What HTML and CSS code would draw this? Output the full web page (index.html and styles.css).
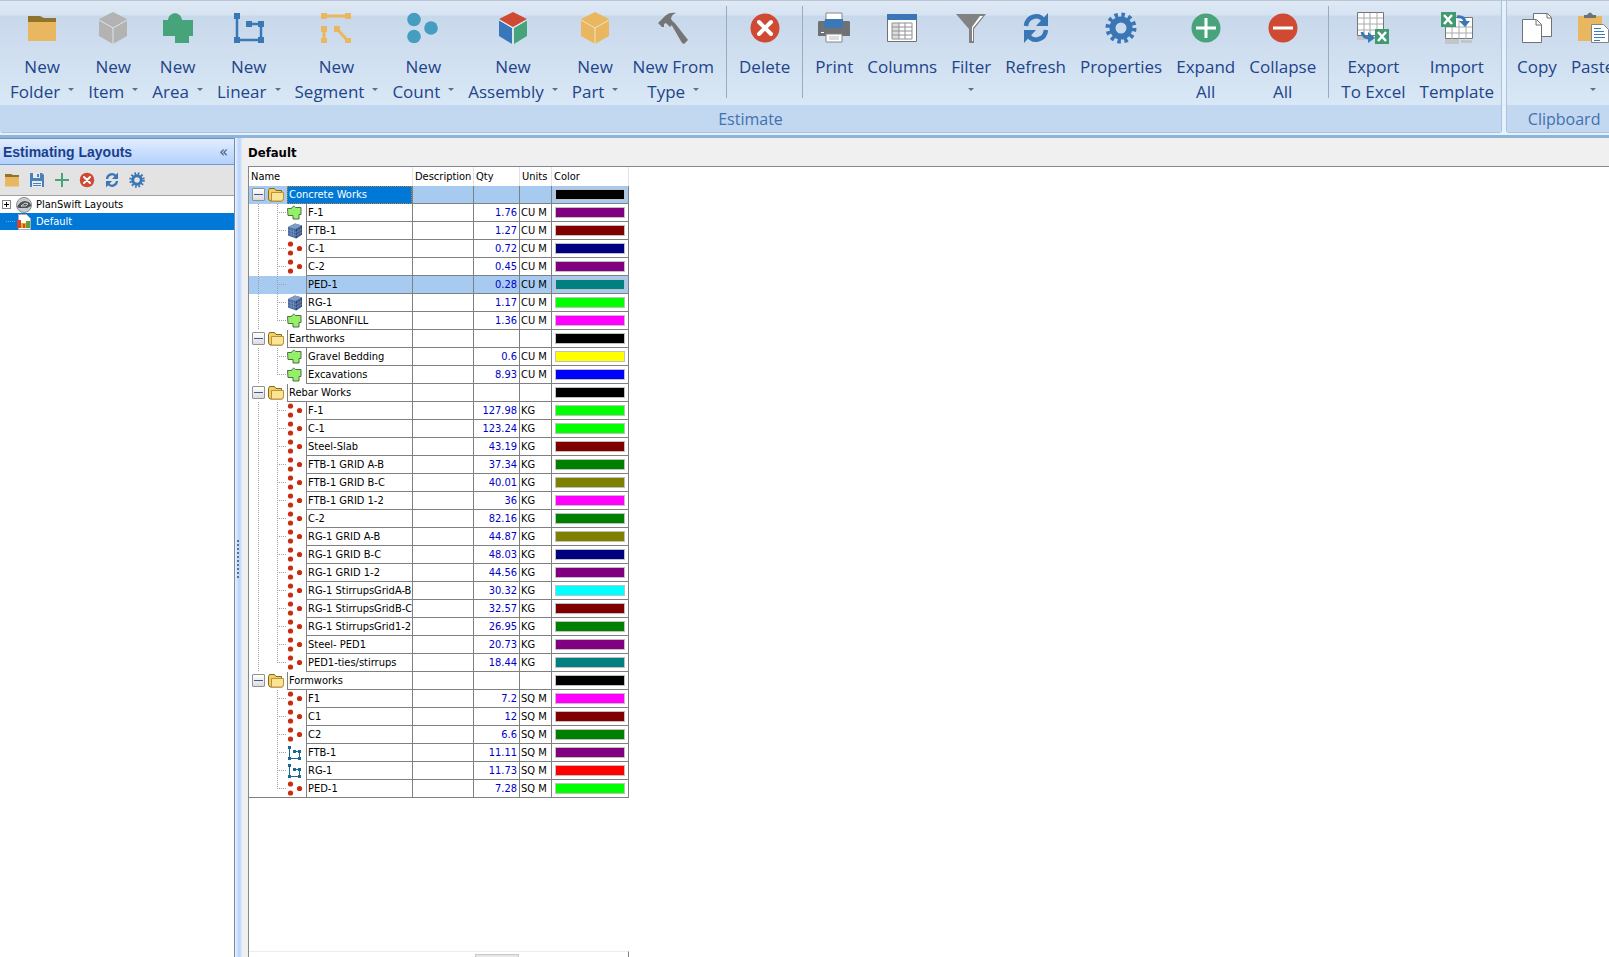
FILE: index.html
```html
<!DOCTYPE html>
<html lang="en">
<head>
  <meta charset="UTF-8">
  <title>Estimating</title>
  <link rel="stylesheet" href="styles.css">
</head>
<body>
  <!-- shared icons -->
  <svg class="defs" width="0" height="0">
    <symbol id="i-folder" viewBox="0 0 32 32"><path fill="#8f742c" d="M2 4h12l4 2h12v4H2z"/><path fill="#e9b760" d="M2 10h28v19H2z"/></symbol>
    <symbol id="i-cube" viewBox="0 0 32 32"><path fill="#b3b3b3" d="M16 0l14 7v17l-14 8-14-8V7z"/><path fill="none" stroke="#dfe4ea" d="M2 8l14 8 14-8M16 16v16"/></symbol>
    <symbol id="i-area" viewBox="0 0 32 32"><path fill="#47a47a" d="M1 8h5c1-9 13-9 14 0h11v16h-4v7H13v-7H1z"/></symbol>
    <symbol id="i-linear" viewBox="0 0 32 32"><path fill="none" stroke="#3a78b5" stroke-width="2.5" d="M4 4v24h24V12H15"/><path fill="#3a78b5" d="M1 1h6v6H1zM1 25h6v6H1zM25 25h6v6h-6zM25 9h6v6h-6zM13 9h6v6h-6z"/></symbol>
    <symbol id="i-segment" viewBox="0 0 32 32"><path fill="none" stroke="#eab75f" stroke-width="3" d="M4 4h24M4 17v12M17 17l11 12"/><path fill="#eab75f" d="M1 1h6v6H1zM25 1h6v6h-6zM1 14h6v6H1zM1 26h6v5H1zM14 14h6v6h-6zM25 26h6v5h-6z"/></symbol>
    <symbol id="i-count" viewBox="0 0 32 32"><g fill="#459dbf"><circle cx="7" cy="7.500" r="6.800"/><circle cx="7" cy="24.500" r="6.800"/><circle cx="24" cy="16" r="6.800"/></g></symbol>
    <symbol id="i-assembly" viewBox="0 0 32 32"><path fill="#d04a33" d="M16 0l14 7-14 8L2 7z"/><path fill="#3a76ba" d="M2 8l13 8v16L2 24z"/><path fill="#47a47a" d="M30 8l-13 8v16l13-8z"/><path fill="none" stroke="#e6edf4" d="M2 8l14 8 14-8M16 16v16"/></symbol>
    <symbol id="i-part" viewBox="0 0 32 32"><path fill="#e9b760" d="M16 0l14 7v17l-14 8-14-8V7z"/><path fill="none" stroke="#efe3cb" d="M2 8l14 8 14-8M16 16v16"/></symbol>
    <symbol id="i-hammer" viewBox="0 0 32 32"><path fill="#757575" d="M1 11l7-7c3-3 7-4 11-3-3 1-5 3-5 6l3 4-4 4-4-4-2 1v3H5z"/><path fill="#757575" d="M14 12l3-2 14 18-4 4-2-1z"/></symbol>
    <symbol id="i-delete" viewBox="0 0 32 32"><circle cx="16" cy="16" r="14.5" fill="#d04a33"/><path stroke="#fff" stroke-width="4" stroke-linecap="round" d="M10 10l12 12M22 10L10 22"/></symbol>
    <symbol id="i-print" viewBox="0 0 32 32"><path fill="#6f7173" d="M1 9h30q1 0 1 2v13H0V11q0-2 1-2z"/><path fill="#fff" stroke="#848688" d="M8 1h16v9H8z"/><path fill="#3a78b8" d="M7 7h18v9H6z"/><path fill="#fff" stroke="#848688" d="M8 22h16v8H8z"/><path stroke="#bbb" d="M11 25h10M11 27h10"/><path fill="#fff" d="M3 20h3v1H3z"/></symbol>
    <symbol id="i-columns" viewBox="0 0 32 32"><path fill="#fff" stroke="#6f7173" d="M1.500 2.500h29v27h-29z"/><path fill="#3a76b5" d="M1 2h30v6H1z"/><path fill="#ddd" d="M6 11h7v16H6z"/><path fill="none" stroke="#8e9092" d="M6 11h20v16H6zM6 15h20M6 19h20M6 23h20M13 11v16M19 11v16"/></symbol>
    <symbol id="i-filter" viewBox="0 0 32 32"><path fill="#828282" d="M1 2h30L19 17v14h-5V17z"/><path fill="#fff" d="M25 4h3L18 16v13h-1V15z"/></symbol>
    <symbol id="i-refresh" viewBox="0 0 32 32"><path fill="none" stroke="#3a76b5" stroke-width="4.500" d="M6 14c1-10 13-13 18-5M26 18c-1 10-13 13-18 5"/><path fill="#3a76b5" d="M28 1v13H16zM4 31V18h12z"/></symbol>
    <symbol id="i-gear" viewBox="0 0 32 32"><circle cx="16" cy="16" r="8.500" fill="none" stroke="#3a76b5" stroke-width="6"/><circle cx="16" cy="16" r="13" fill="none" stroke="#3a76b5" stroke-width="5" stroke-dasharray="3.400 3.407"/></symbol>
    <symbol id="i-expand" viewBox="0 0 32 32"><circle cx="16" cy="16" r="14.500" fill="#47a47a"/><path stroke="#fff" stroke-width="3" d="M6 16h20M16 6v20"/></symbol>
    <symbol id="i-collapse" viewBox="0 0 32 32"><circle cx="16" cy="16" r="14.500" fill="#d04a33"/><path stroke="#fff" stroke-width="3" d="M6 16h20"/></symbol>
    <symbol id="i-export" viewBox="0 0 32 32"><path fill="#c3c6c9" d="M0 24h14v4H0z"/><path fill="#fff" stroke="#777" d="M.5.5h26v23H.5z"/><path stroke="#aaa" d="M1 6h25M1 12h25M1 18h25M7 1v23M13 1v23M20 1v23"/><path fill="none" stroke="#3a78b8" stroke-width="3" d="M5 20q1 6 8 6"/><path fill="#3a78b8" d="M11 20l7 6-7 5z"/><path fill="#3f9a70" d="M18 17h14v15H18z"/><path stroke="#fff" stroke-width="2.500" d="M21 20l8 9M29 20l-8 9"/></symbol>
    <symbol id="i-import" viewBox="0 0 32 32"><path fill="#c3c6c9" d="M4 27h14v5H4zM20 28h11v3H20z"/><path fill="#fff" stroke="#777" d="M4.500 5.500h27v21h-27z"/><path stroke="#aaa" d="M5 15h26M5 21h26M11 8v19M18 8v19M25 8v19"/><path fill="#3f9a70" d="M0 0h15v15H0z"/><path stroke="#fff" stroke-width="2.500" d="M3 3l8 9M11 3l-8 9"/><path fill="none" stroke="#3a78b8" stroke-width="3" d="M16 5q7-1 8 5"/><path fill="#3a78b8" d="M18 9h11l-5 6z"/></symbol>
    <symbol id="i-copy" viewBox="0 0 32 32"><g fill="#fff" stroke="#6f7173"><path d="M12.500 1.500h14l4 4v19h-18z"/><path d="M26 2v4h4"/><path d="M1.500 7.500h14l5 5v18h-19z"/><path d="M15 8v5h5"/></g></symbol>
    <symbol id="i-paste" viewBox="0 0 32 32"><path fill="#e9b760" d="M1 4h24v25H1z"/><path fill="#6f7173" d="M7 6V3h3q3-5 6 0h3v3z"/><path fill="#fff" stroke="#848688" d="M14.500 12.500h12l5 5v13h-17z"/><path stroke="#3a78b8" d="M17 16.500h7M17 19.500h10M17 22.500h11M17 25.500h11M17 28.500h6"/></symbol>
    <symbol id="i-save" viewBox="0 0 16 16"><path fill="#4b80b8" d="M1 1h12l2 2v12H1z"/><path fill="#e8edf3" d="M4 1h7v5H4zM3 9h10v6H3z"/><path fill="#4b80b8" d="M8 2h2v3H8zM4 11h8v1H4zM4 13h8v1H4z"/></symbol>
    <symbol id="i-plus" viewBox="0 0 16 16"><path stroke="#47a47a" stroke-width="2" d="M1 8h14M8 1v14"/></symbol>
    <symbol id="i-globe" viewBox="0 0 16 16"><circle cx="8" cy="8" r="7.500" fill="#c9cccf" stroke="#8b8e91"/><path fill="#4a5054" d="M1 10q3-6 8-6 6 1 6 5l-4 2H3z"/><path fill="none" stroke="#d7dadc" d="M5 9l4-3 3 1-2 2z"/></symbol>
    <symbol id="i-chart" viewBox="0 0 16 16"><path fill="#fff" stroke="#aab" d="M2.500.5h8l4 4v11h-12z"/><path fill="#d8442c" d="M1 6h4v8H1z"/><path fill="#e9a820" d="M5 9h5v5H5z"/><path fill="#d8442c" d="M7 10h2v4H7z"/><path fill="#57a336" d="M10 7h4v7h-4z"/></symbol>
    <symbol id="t-folder" viewBox="0 0 16 16"><path fill="#f0cf66" stroke="#87671a" d="M.5 3.500l1-2h5l1.500 2h5.500v3l2 .5v5l-1.500 2h-12l-1.500-2z"/><path fill="#fbe494" stroke="#b8923a" d="M3.500 5.500h12v6l-1 2.500h-11z"/></symbol>
    <symbol id="t-area" viewBox="0 0 16 16"><path fill="#96ef69" stroke="#4d6f45" d="M.5 3.500h4q2-4 4-1h5.500v7h-2v4.500h-6v-3.500h-5z"/></symbol>
    <symbol id="t-part" viewBox="0 0 16 16"><path fill="#46699f" d="M1 4l7-3.500 7 2v9L9 15.500l-8-3z"/><path fill="#7f9cc5" d="M1 4l7-3.500 7 2L9 6z"/><path fill="#2d4a7b" d="M9 6l6-3.500v9L9 15.500z"/><path fill="none" stroke="#8ea6cb" stroke-width=".5" d="M1 7l8 2.500L15 6M1 10l8 2.500L15 9M4 5v8.500M6.500 5.500v9M11 5v9.500M13 4v9"/></symbol>
    <symbol id="t-count" viewBox="0 0 16 16"><g fill="#c72d10"><circle cx="3.500" cy="3" r="2.600"/><circle cx="3.500" cy="12" r="2.600"/><circle cx="12.500" cy="7.500" r="2.600"/></g></symbol>
    <symbol id="t-linear" viewBox="0 0 16 16"><path fill="none" stroke="#1c6794" d="M2.500 2v11.500h10V6.500H7"/><path fill="#1c6794" d="M1 1h3v3H1zM1 12h3v3H1zM11 12h3v3h-3zM11 5h3v3h-3zM6 5h3v3H6z"/></symbol>
  </svg>

  <header class="ribbon">
    <section class="group">
      <div class="tools">
        <button class="tool"><svg><use href="#i-folder"/></svg>New<br><span class="drop">Folder</span></button>
        <button class="tool"><svg><use href="#i-cube"/></svg>New<br><span class="drop">Item</span></button>
        <button class="tool"><svg><use href="#i-area"/></svg>New<br><span class="drop">Area</span></button>
        <button class="tool"><svg><use href="#i-linear"/></svg>New<br><span class="drop">Linear</span></button>
        <button class="tool"><svg><use href="#i-segment"/></svg>New<br><span class="drop">Segment</span></button>
        <button class="tool"><svg><use href="#i-count"/></svg>New<br><span class="drop">Count</span></button>
        <button class="tool"><svg><use href="#i-assembly"/></svg>New<br><span class="drop">Assembly</span></button>
        <button class="tool"><svg><use href="#i-part"/></svg>New<br><span class="drop">Part</span></button>
        <button class="tool"><svg><use href="#i-hammer"/></svg>New From<br><span class="drop">Type</span></button>
        <span class="sep"></span>
        <button class="tool"><svg><use href="#i-delete"/></svg>Delete</button>
        <span class="sep"></span>
        <button class="tool"><svg><use href="#i-print"/></svg>Print</button>
        <button class="tool"><svg><use href="#i-columns"/></svg>Columns</button>
        <button class="tool"><svg><use href="#i-filter"/></svg>Filter<br><span class="drop only"></span></button>
        <button class="tool"><svg><use href="#i-refresh"/></svg>Refresh</button>
        <button class="tool"><svg><use href="#i-gear"/></svg>Properties</button>
        <button class="tool"><svg><use href="#i-expand"/></svg>Expand<br>All</button>
        <button class="tool"><svg><use href="#i-collapse"/></svg>Collapse<br>All</button>
        <span class="sep"></span>
        <button class="tool"><svg><use href="#i-export"/></svg>Export<br>To Excel</button>
        <button class="tool"><svg><use href="#i-import"/></svg>Import<br>Template</button>
      </div>
      <div class="caption">Estimate</div>
    </section>
    <section class="group">
      <div class="tools">
        <button class="tool"><svg><use href="#i-copy"/></svg>Copy</button>
        <button class="tool"><svg><use href="#i-paste"/></svg>Paste<br><span class="drop only"></span></button>
      </div>
      <div class="caption">Clipboard</div>
    </section>
  </header>

  <div class="workspace">
    <aside class="sidebar">
      <div class="side-head"><h2>Estimating Layouts</h2><button class="collapse">«</button></div>
      <div class="side-tools">
        <button aria-label="Open"><svg><use href="#i-folder"/></svg></button>
        <button aria-label="Save"><svg><use href="#i-save"/></svg></button>
        <button aria-label="Add"><svg><use href="#i-plus"/></svg></button>
        <button aria-label="Delete"><svg><use href="#i-delete"/></svg></button>
        <button aria-label="Refresh"><svg><use href="#i-refresh"/></svg></button>
        <button aria-label="Settings"><svg><use href="#i-gear"/></svg></button>
      </div>
      <ul class="layouts">
        <li><span class="toggle"><i class="plus"></i></span><svg><use href="#i-globe"/></svg>PlanSwift Layouts</li>
        <li class="selected"><span class="toggle"></span><svg><use href="#i-chart"/></svg>Default</li>
      </ul>
    </aside>
    <div class="splitter"><span class="grip"></span></div>
    <main class="main">
      <h1>Default</h1>
      <div class="sheet">
        <table class="grid">
          <colgroup><col class="c-name"><col class="c-desc"><col class="c-qty"><col class="c-units"><col class="c-color"></colgroup>
          <thead>
            <tr><th>Name</th><th>Description</th><th>Qty</th><th>Units</th><th>Color</th></tr>
          </thead>
          <tbody id="rows"></tbody>
        </table>
        <div class="footer"><span class="thumb"></span></div>
      </div>
    </main>
  </div>

  <script>
    // [icon, name, qty, units, color]
    const groups = [
      ['Concrete Works', [
        ['area', 'F-1', '1.76', 'CU M', '#800080'],
        ['part', 'FTB-1', '1.27', 'CU M', '#800000'],
        ['count', 'C-1', '0.72', 'CU M', '#000080'],
        ['count', 'C-2', '0.45', 'CU M', '#800080'],
        ['', 'PED-1', '0.28', 'CU M', '#008080'],
        ['part', 'RG-1', '1.17', 'CU M', '#00ff00'],
        ['area', 'SLABONFILL', '1.36', 'CU M', '#ff00ff']
      ]],
      ['Earthworks', [
        ['area', 'Gravel Bedding', '0.6', 'CU M', '#ffff00'],
        ['area', 'Excavations', '8.93', 'CU M', '#0000ff']
      ]],
      ['Rebar Works', [
        ['count', 'F-1', '127.98', 'KG', '#00ff00'],
        ['count', 'C-1', '123.24', 'KG', '#00ff00'],
        ['count', 'Steel-Slab', '43.19', 'KG', '#800000'],
        ['count', 'FTB-1 GRID A-B', '37.34', 'KG', '#008000'],
        ['count', 'FTB-1 GRID B-C', '40.01', 'KG', '#808000'],
        ['count', 'FTB-1 GRID 1-2', '36', 'KG', '#ff00ff'],
        ['count', 'C-2', '82.16', 'KG', '#008000'],
        ['count', 'RG-1 GRID A-B', '44.87', 'KG', '#808000'],
        ['count', 'RG-1 GRID B-C', '48.03', 'KG', '#000080'],
        ['count', 'RG-1 GRID 1-2', '44.56', 'KG', '#800080'],
        ['count', 'RG-1 StirrupsGridA-B', '30.32', 'KG', '#00ffff'],
        ['count', 'RG-1 StirrupsGridB-C', '32.57', 'KG', '#800000'],
        ['count', 'RG-1 StirrupsGrid1-2', '26.95', 'KG', '#008000'],
        ['count', 'Steel- PED1', '20.73', 'KG', '#800080'],
        ['count', 'PED1-ties/stirrups', '18.44', 'KG', '#008080']
      ]],
      ['Formworks', [
        ['count', 'F1', '7.2', 'SQ M', '#ff00ff'],
        ['count', 'C1', '12', 'SQ M', '#800000'],
        ['count', 'C2', '6.6', 'SQ M', '#008000'],
        ['linear', 'FTB-1', '11.11', 'SQ M', '#800080'],
        ['linear', 'RG-1', '11.73', 'SQ M', '#ff0000'],
        ['count', 'PED-1', '7.28', 'SQ M', '#00ff00']
      ]]
    ];

    function row(cls, tree, name, qty, units, color) {
      return `<tr class="${cls}"><td class="name"><div>${tree}<span class="label">${name}</span></div></td>` +
        `<td></td><td class="qty">${qty}</td><td>${units}</td>` +
        `<td class="color"><span class="swatch" style="background:${color}"></span></td></tr>`;
    }

    let html = '';
    groups.forEach(([title, items], g) => {
      const lastGroup = g === groups.length - 1;
      html += row(g === 0 ? 'folder current' : 'folder',
        '<span class="step"><i class="minus"></i></span><span class="step"><svg><use href="#t-folder"/></svg></span>',
        title, '', '', '#000');
      items.forEach(([icon, name, qty, units, color], i) => {
        const end = i === items.length - 1 ? ' end' : '';
        const tree = `<span class="step${lastGroup ? '' : ' line'}"></span><span class="step branch${end}"></span>` +
          `<span class="step">${icon ? `<svg><use href="#t-${icon}"/></svg>` : ''}</span>`;
        html += row(icon ? '' : 'hot', tree, name, qty, units, color);
      });
    });
    document.getElementById('rows').innerHTML = html;
  </script>
</body>
</html>
```
FILE: styles.css
```css
* {
  box-sizing: border-box;
}

body {
  margin: 0;
  height: 100vh;
  display: flex;
  flex-direction: column;
  overflow: hidden;
  background: #f0f0f0;
  color: #000;
  font-family: "DejaVu Sans Condensed", "DejaVu Sans", sans-serif;
  font-size: 11px;
}

.defs {
  position: absolute;
}

button {
  border: 0;
  padding: 0;
  background: none;
  font: inherit;
  color: inherit;
}

h1, h2, ul {
  margin: 0;
  padding: 0;
}

/* ribbon */
.ribbon {
  display: flex;
  gap: 4px;
  flex: none;
  overflow: hidden;
  border-top: 1px solid #b9c6d8;
  background: #e6f1fc;
  border-bottom: 3px solid #8eb4da;
  padding-bottom: 2px;
  font-family: "Open Sans", "Noto Sans", sans-serif;
  font-size: 17px;
  line-height: 25px;
  color: #1e4489;
}

.group {
  flex: none;
  border-right: 1px solid #a9c4e2;
  border-bottom: 1px solid #a9c4e2;
  border-radius: 0 0 3px 3px;
}

.tools {
  display: flex;
  height: 104px;
  padding-left: 3px;
  background: linear-gradient(#dfe9f5, #d6e3f2 14px, #c8d8eb 15px, #d9e8f6);
}

.group + .group {
  border-left: 1px solid #a9c4e2;
}

.tool {
  display: block;
  padding: 11px 7px 0;
  align-self: flex-start;
  text-align: center;
  white-space: nowrap;
}

.tool svg {
  display: block;
  width: 32px;
  height: 32px;
  margin: 0 auto 10px;
}

.drop::after {
  content: "";
  display: inline-block;
  margin-left: 8px;
  vertical-align: 7px;
  border: 3px solid transparent;
  border-top-color: #5a6f92;
  border-bottom: 0;
}

.drop.only::after {
  margin-left: 0;
}

.sep {
  width: 1px;
  margin: 5px 5px 7px;
  background: #98abc3;
}

.caption {
  height: 27px;
  padding-top: 2px;
  background: #c1d8f0;
  font-size: 16px;
  color: #4470b0;
  text-align: center;
}

/* workspace */
.workspace {
  flex: 1;
  display: flex;
  min-height: 0;
}

.sidebar {
  width: 235px;
  flex: none;
  background: #fff;
  border-top: 1px solid #6d8fc0;
  border-right: 1px solid #7a8ba8;
}

.side-head {
  display: flex;
  justify-content: space-between;
  align-items: center;
  height: 26px;
  padding: 0 6px 0 3px;
  background: linear-gradient(#e2edff, #b3d1fb);
  border-bottom: 1px solid #6f9ad6;
}

.side-head h2 {
  font: bold 14px "Liberation Sans", Arial, sans-serif;
  color: #1b3f8b;
}

.collapse {
  font-size: 16px;
  line-height: 20px;
  color: #46597e;
}

.side-tools {
  display: flex;
  align-items: center;
  gap: 9px;
  height: 31px;
  padding-left: 4px;
  background: #e3e3e3;
  border-bottom: 1px solid #a0a0a0;
}

.side-tools button, .side-tools svg {
  display: block;
  width: 16px;
  height: 16px;
}

.layouts {
  list-style: none;
}

.layouts li {
  display: flex;
  align-items: center;
  height: 17px;
}

.layouts svg {
  width: 16px;
  height: 16px;
  margin-right: 4px;
}

.layouts .selected {
  background: #0078d7;
  color: #fff;
}

.toggle {
  width: 16px;
  height: 17px;
  padding: 4px 2px;
}

.selected .toggle {
  background: repeating-linear-gradient(90deg, #6fb0e8 0 1px, transparent 1px 2px) 6px 8px / 10px 1px no-repeat;
}

.plus {
  display: block;
  width: 9px;
  height: 9px;
  border: 1px solid #848484;
  background: linear-gradient(#000, #000) 1px 3px / 5px 1px no-repeat, linear-gradient(#000, #000) 3px 1px / 1px 5px no-repeat, #fff;
}

.splitter {
  width: 7px;
  flex: none;
  display: flex;
  align-items: center;
  background: linear-gradient(90deg, #e9f2ff, #b9d4fb 60%, #dce9fb);
}

.grip {
  width: 2px;
  height: 40px;
  margin: 24px 0 0 2px;
  background: repeating-linear-gradient(#5d6f8c 0 2px, transparent 2px 4px);
}

.main {
  flex: 1;
  min-width: 0;
  display: flex;
  flex-direction: column;
  padding-left: 6px;
}

.main h1 {
  height: 28px;
  font-size: 13px;
  line-height: 30px;
}

.sheet {
  flex: 1;
  display: flex;
  flex-direction: column;
  align-items: flex-start;
  background: #fff;
  border-top: 1px solid #828790;
  border-left: 1px solid #828790;
}

/* estimate grid */
.grid {
  width: 380px;
  table-layout: fixed;
  border-collapse: separate;
  border-spacing: 0;
}

.c-name { width: 164px; }
.c-desc { width: 61px; }
.c-qty { width: 46px; }
.c-units { width: 32px; }
.c-color { width: 77px; }

.grid th {
  height: 19px;
  padding: 0 2px;
  font-weight: normal;
  text-align: left;
  border-right: 1px solid #e3e3e3;
}

.grid td {
  height: 18px;
  padding: 0 1px;
  line-height: 17px;
  white-space: nowrap;
  border-right: 1px solid #808080;
  border-bottom: 1px solid #808080;
}

.grid td.name {
  padding: 0;
  border-bottom: 0;
}

.name div {
  display: flex;
  height: 18px;
}

.label {
  flex: 1;
  padding-left: 1px;
  line-height: 18px;
  overflow: hidden;
  border-left: 1px solid #808080;
  border-bottom: 1px solid #808080;
}

.grid tr:last-child .name {
  border-bottom: 1px solid #808080;
}

.grid tr:last-child .name div {
  height: 17px;
}

.grid tr:last-child .label {
  border-bottom: 0;
}

.grid td.qty {
  padding-right: 2px;
  text-align: right;
  color: #0000c8;
}

.grid td.color {
  padding: 0 3px;
}

.swatch {
  display: block;
  height: 11px;
  border: 1px solid #c0c0c0;
}

.current, .hot {
  background: #a6caf0;
}

.current .label {
  background: #0078d7;
  color: #fff;
  border: 1px dotted #c97f3a;
  line-height: 16px;
}

/* tree guides */
.step {
  flex: none;
  width: 19px;
  height: 18px;
}

.step svg {
  display: block;
  width: 16px;
  height: 16px;
  margin-top: 1px;
}

.line {
  background: repeating-linear-gradient(#a0a0a0 0 1px, transparent 1px 2px) 9px 0 / 1px 100% no-repeat;
}

.branch {
  background:
    repeating-linear-gradient(#a0a0a0 0 1px, transparent 1px 2px) 9px 0 / 1px 100% no-repeat,
    repeating-linear-gradient(90deg, #a0a0a0 0 1px, transparent 1px 2px) 9px 8px / 9px 1px no-repeat;
}

.branch.end {
  background:
    repeating-linear-gradient(#a0a0a0 0 1px, transparent 1px 2px) 9px 0 / 1px 9px no-repeat,
    repeating-linear-gradient(90deg, #a0a0a0 0 1px, transparent 1px 2px) 9px 8px / 9px 1px no-repeat;
}

.minus {
  display: block;
  width: 13px;
  height: 13px;
  margin: 2px 0 0 3px;
  border: 1px solid #919191;
  border-radius: 1px;
  background: linear-gradient(#3c5aa0, #3c5aa0) 1px 5px / 9px 1px no-repeat, linear-gradient(#fff, #dcdcdc);
}

.footer {
  width: 380px;
  height: 6px;
  margin-top: auto;
  padding: 2px 0 0 226px;
  border-top: 1px solid #ececec;
  border-right: 1px solid #808080;
}

.thumb {
  display: block;
  width: 44px;
  height: 4px;
  background: #e6e6e8;
  border: 1px solid #c8c8cc;
  border-bottom: 0;
}
```
